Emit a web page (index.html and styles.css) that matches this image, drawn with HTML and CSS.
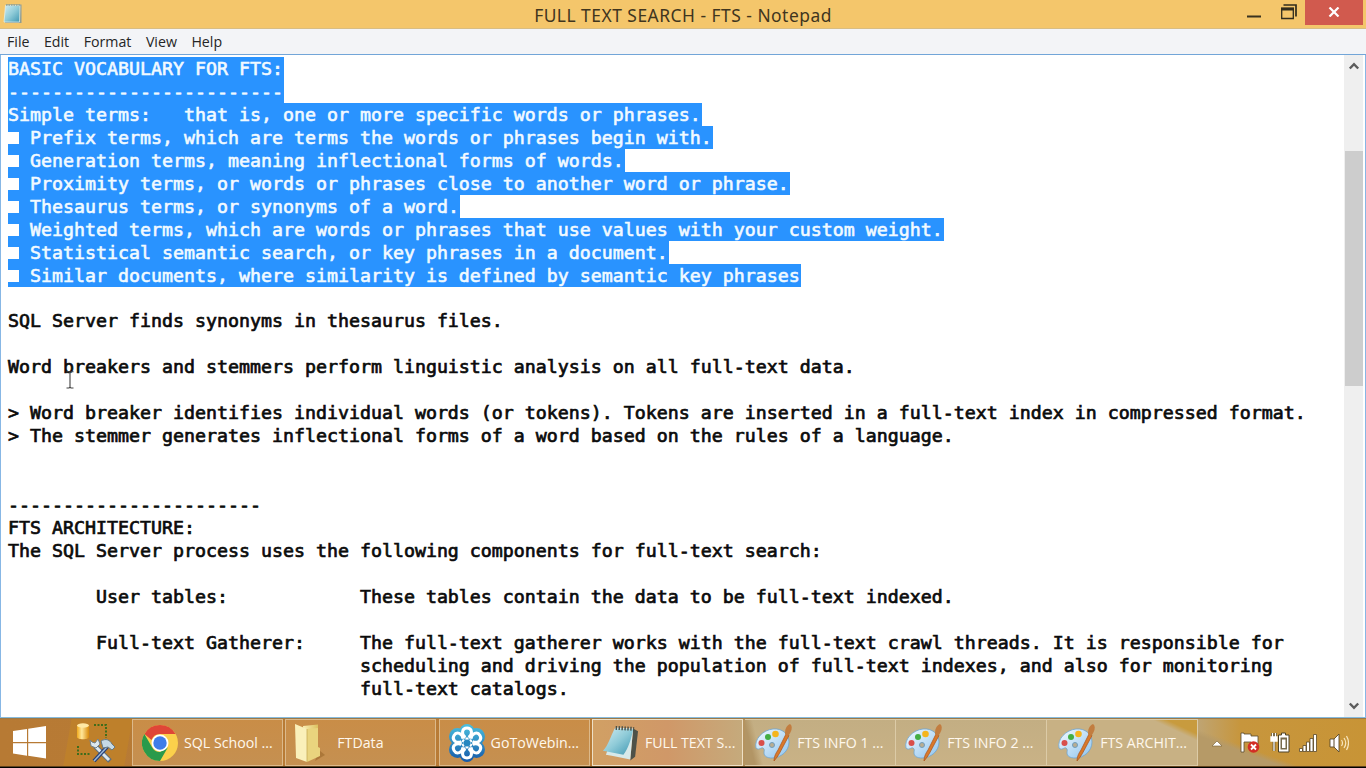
FILE: index.html
```html
<!DOCTYPE html>
<html lang="en">
<head>
<meta charset="utf-8">
<title>FULL TEXT SEARCH - FTS - Notepad</title>
<link rel="stylesheet" href="styles.css">
</head>
<body>
<svg class="defs" width="0" height="0" aria-hidden="true">
  <defs>
    <linearGradient id="pal" x1="0" y1="0" x2="1" y2="1"><stop offset="0" stop-color="#f4fbff"/><stop offset="1" stop-color="#8fc4ee"/></linearGradient>
    <linearGradient id="note" x1="0" y1="0" x2="1" y2="1"><stop offset="0" stop-color="#d2edf2"/><stop offset=".5" stop-color="#8fcbd8"/><stop offset="1" stop-color="#3d96b2"/></linearGradient>
    <linearGradient id="gold" x1="0" y1="0" x2="1" y2="0"><stop offset="0" stop-color="#f0a91d"/><stop offset=".4" stop-color="#ffe79a"/><stop offset="1" stop-color="#d98a0a"/></linearGradient>
    <linearGradient id="fold" x1="0" y1="0" x2="1" y2="0"><stop offset="0" stop-color="#f9eeb2"/><stop offset="1" stop-color="#dcc05f"/></linearGradient>
    <linearGradient id="gtw" gradientUnits="userSpaceOnUse" x1="0" y1="0" x2="0" y2="38"><stop offset="0" stop-color="#49c0df"/><stop offset="1" stop-color="#1558a8"/></linearGradient>
    <symbol id="paint" viewBox="0 0 38 38">
      <path d="M2 24C0 15 9 6 19 5c9-1 16 5 16 13 0 9-8 16-17 16-5 0-8-2-8-5 0-2 1-4-1-5-2-1-4 3-7 0z" fill="url(#pal)" stroke="#6fa5cf" stroke-width=".8"/>
      <circle cx="18" cy="21" r="2.500" fill="#b9ad91" stroke="#6f9dbd"/>
      <circle cx="7.500" cy="19" r="3" fill="#d94f4b"/><circle cx="14" cy="13" r="3" fill="#43ae43"/><circle cx="21.500" cy="10" r="3.300" fill="#f5b51f"/>
      <path d="M20 37c0-5 2-8 4-11l8-16 3 1.500-8 15c-2 4-4 7-7 10.500z" fill="#d9792b" stroke="#a8521b" stroke-width=".7"/>
      <path d="M31 10c0-5 1-8 5-10 3 2 2 8-2 12z" fill="#c27d40"/>
    </symbol>
  </defs>
</svg>
<div class="window">
  <header class="titlebar">
    <svg class="app-icon" viewBox="0 0 20 21"><path d="M4 1.500h15.500V20H3z" fill="#8d9b93"/><path d="M3.500 2.500h14.500L17.500 19H2z" fill="url(#note)" stroke="#e6f2ed" stroke-width=".7"/><path d="M4 2h15" stroke="#8ea39b" stroke-width="1.500" stroke-dasharray="1.500 1"/></svg>
    <h1 class="title">FULL TEXT SEARCH - FTS - Notepad</h1>
    <div class="controls">
      <svg class="min" viewBox="0 0 14 3"><path d="M0 1.500h14" stroke="#39321f" stroke-width="2"/></svg>
      <svg class="max" viewBox="0 0 16 16"><path d="M2.500 1h12.500v11.500" fill="none" stroke="#302c1d" stroke-width="1.700"/><path d="M.7 4.500h11.600v10H.7z" fill="none" stroke="#302c1d" stroke-width="1.300"/><path d="M0 5h13" stroke="#302c1d" stroke-width="3"/></svg>
      <div class="close"><svg viewBox="0 0 12 10"><path d="M1.500.5l9 9M10.500.5l-9 9" stroke="#fff" stroke-width="2.200"/></svg></div>
    </div>
  </header>
  <nav class="menubar"><span>File</span><span>Edit</span><span>Format</span><span>View</span><span>Help</span></nav>
  <main class="editor">
<pre class="text"><span class="sel">BASIC VOCABULARY FOR FTS:</span>
<span class="sel">-------------------------</span>
<span class="sel">Simple terms:   that is, one or more specific words or phrases.</span>
<span class="sel"><i class="sq"></i> Prefix terms, which are terms the words or phrases begin with.</span>
<span class="sel"><i class="sq"></i> Generation terms, meaning inflectional forms of words.</span>
<span class="sel"><i class="sq"></i> Proximity terms, or words or phrases close to another word or phrase.</span>
<span class="sel"><i class="sq"></i> Thesaurus terms, or synonyms of a word.</span>
<span class="sel"><i class="sq"></i> Weighted terms, which are words or phrases that use values with your custom weight.</span>
<span class="sel"><i class="sq"></i> Statistical semantic search, or key phrases in a document.</span>
<span class="sel"><i class="sq"></i> Similar documents, where similarity is defined by semantic key phrases</span>

SQL Server finds synonyms in thesaurus files.

Word breakers and stemmers perform linguistic analysis on all full-text data.

&gt; Word breaker identifies individual words (or tokens). Tokens are inserted in a full-text index in compressed format.
&gt; The stemmer generates inflectional forms of a word based on the rules of a language.


-----------------------
FTS ARCHITECTURE:
The SQL Server process uses the following components for full-text search:

        User tables:            These tables contain the data to be full-text indexed.

        Full-text Gatherer:     The full-text gatherer works with the full-text crawl threads. It is responsible for
                                scheduling and driving the population of full-text indexes, and also for monitoring
                                full-text catalogs.</pre>
    <svg class="ibeam" viewBox="0 0 8 18"><path d="M.5 .8h2.500l1 .8 1-.8h2.500M4 1v15.500M.5 17h2.500l1-.8 1 .8h2.500" fill="none" stroke="#444" stroke-width="1.100"/></svg>
    <div class="scrollbar">
      <svg viewBox="0 0 12 8"><path d="M1.800 6.500L6 2.200l4.200 4.300" fill="none" stroke="#5c5c5c" stroke-width="2.400"/></svg>
      <div class="thumb"></div>
      <svg viewBox="0 0 12 8"><path d="M1.800 1.500L6 5.800l4.200-4.300" fill="none" stroke="#5c5c5c" stroke-width="2.400"/></svg>
    </div>
  </main>
</div>
<footer class="taskbar">
  <div class="start"><svg viewBox="0 0 33 33"><path d="M0 5l14-2v13H0zM15.200 2.800L33 0v16H15.200zM0 17.200h14v12.500L0 27.500zM15.200 17.200H33v15.300l-17.800-2.700z" fill="#fff"/></svg></div>
  <div class="pinned"><svg viewBox="0 0 40 42">
    <path d="M18 3h12v13M2 24v8h12" fill="none" stroke="#3f6d1c" stroke-width="2" stroke-dasharray="2 1.500"/>
    <path d="M1 3v12c0 3 12 3 12 0V3z" fill="url(#gold)"/><ellipse cx="7" cy="3.500" rx="6" ry="2.200" fill="#ffe9a5"/>
    <path d="M19 24l15 15" stroke="#5e6e7e" stroke-width="5"/><path d="M19 24l14 14" stroke="#dce8f0" stroke-width="3"/>
    <path d="M14 18l1 6 5 2 4-4-2-5-3 4-3-1z" fill="#dce8f0" stroke="#71818c"/>
    <path d="M31 25L18 39" stroke="#263f75" stroke-width="4"/><path d="M31 25L18 39" stroke="#9cb7d8" stroke-width="1.500"/>
    <path d="M25 19c5-3 9-1 11 3l3 3-3 3-4-3-5 1z" fill="#c6d9e5" stroke="#647986"/>
  </svg></div>
  <div class="task"><svg viewBox="0 0 36 36"><circle cx="18" cy="18" r="18" fill="#fbd04b"/><path d="M2.400 9A18 18 0 0 1 33.600 9H18a9 9 0 0 0-8.500 6z" fill="#df4637"/><path d="M2.400 9A18 18 0 0 0 18 36l7.800-13.500L18 27a9 9 0 0 1-7.800-4.500z" fill="#2a9a4b"/><circle cx="18" cy="18" r="8.500" fill="#fff"/><circle cx="18" cy="18" r="6.700" fill="#3f7de8"/></svg><span>SQL School ...</span></div>
  <div class="task"><svg class="folder" viewBox="0 0 30 38"><path d="M24 26l6 5-10 6z" fill="#8b5c20" opacity=".45"/><path d="M8 2l15-1.500v28L11 34z" fill="url(#fold)"/><path d="M0 0l12 5v33L1 34z" fill="#faf0ba"/><path d="M12 5l11-1v19l2 1v8l-13 6z" fill="#e9d47e"/><path d="M12 5v33" stroke="#c7ab55" stroke-width=".8"/></svg><span>FTData</span></div>
  <div class="task"><svg viewBox="0 0 36 38"><g fill="url(#gtw)"><circle cx="18" cy="7.500" r="7.500"/><circle cx="8.500" cy="12.500" r="8.500"/><circle cx="27.500" cy="12.500" r="8.500"/><circle cx="8.500" cy="25.500" r="8.500"/><circle cx="27.500" cy="25.500" r="8.500"/><circle cx="18" cy="30.500" r="7.500"/><circle cx="18" cy="19" r="13"/></g><g fill="none" stroke="#fff" stroke-width="3"><path id="petal" d="M18 17v-3.500M16.300 13.500c-4.500-3.500-3.300-9.500 1.700-9.500s6.200 6 1.700 9.500"/><use href="#petal" transform="rotate(60 18 19)"/><use href="#petal" transform="rotate(120 18 19)"/><use href="#petal" transform="rotate(180 18 19)"/><use href="#petal" transform="rotate(240 18 19)"/><use href="#petal" transform="rotate(300 18 19)"/></g><circle cx="18" cy="19" r="3.500" fill="#2787c0"/></svg><span>GoToWebin...</span></div>
  <div class="task active"><svg viewBox="0 0 38 38"><path d="M32 4l5 3-3 26-5 4z" fill="#4d5148"/><path d="M14 3l18 1-3 32-19-4-6-1z" fill="#d7e9ea"/><path d="M13 4l19 1c-2 10-5 20-10 26L1 27C6 22 9 12 13 4z" fill="url(#note)"/><path d="M14 3.500l19 1" stroke="#4a5048" stroke-width="4" stroke-dasharray="1.500 1.500"/></svg><span>FULL TEXT S...</span></div>
  <div class="task paint-group first"><svg><use href="#paint"/></svg><span>FTS INFO 1 ...</span></div>
  <div class="task paint-group"><svg><use href="#paint"/></svg><span>FTS INFO 2 ...</span></div>
  <div class="task paint-group last"><svg><use href="#paint"/></svg><span>FTS ARCHIT...</span></div>
  <div class="tray">
    <svg class="t-up" viewBox="0 0 12 8"><path d="M1 7l5-5 5 5z" fill="#fff" stroke="#765b2e" stroke-width=".6"/></svg>
    <svg class="t-flag" viewBox="0 0 20 22"><path d="M1 1h3v1h7v2h7v8h-7v-2H4v10H1z" fill="#fff" stroke="#594a2e" stroke-width=".8"/><circle cx="13.500" cy="15" r="5.800" fill="#d22e25"/><path d="M11 12.500l5 5M16 12.500l-5 5" stroke="#fff" stroke-width="1.800"/></svg>
    <svg class="t-bat" viewBox="0 0 20 22"><path d="M2.500 1v4M5.500 1v4M4 9v10" stroke="#4e4328" stroke-width="2.600"/><path d="M2.500 1v4M5.500 1v4M1 5h6v4H1zM4 9v10" stroke="#fff" stroke-width="1.300" fill="#fff"/><path d="M8.500 3h3V1h4v2h3.500v17H8.500z" fill="#fff" stroke="#4e4328"/><path d="M10.500 5.500h6.500v12h-6.500z" fill="#766a4d"/><path d="M12 7.500h3.500v8.500H12z" fill="#fff"/></svg>
    <svg class="t-net" viewBox="0 0 18 18"><path d="M.5 14.500h3v3h-3zM4 11.500h3v6H4zM7.500 8h3v9.500h-3zM11 4.500h3v13h-3zM14.500.5h3v17h-3z" fill="#fff" stroke="#5a4929" stroke-width=".8"/></svg>
    <svg class="t-vol" viewBox="0 0 20 20"><path d="M1 6h4l5-5v18l-5-5H1z" fill="#fff" stroke="#5a4929" stroke-width=".9"/><path d="M5 6v8" stroke="#5a4929"/><path d="M12.500 7q2 3 0 6M15 5q3.500 5 0 10M17.500 3q4 7 0 14" fill="none" stroke="#f8e6bd" stroke-width="1.200"/></svg>
  </div>
</footer>
</body>
</html>
```
FILE: styles.css
```css
* { box-sizing: border-box; }
body { margin: 0; width: 1366px; height: 768px; overflow: hidden; display: flex; flex-direction: column; background: #000; font-family: "Open Sans", "Noto Sans", sans-serif; }
svg { display: block; flex: none; }
.defs { position: absolute; }
.window { height: 718px; display: flex; flex-direction: column; background: #fff; }
.titlebar { height: 29px; flex: none; display: grid; grid-template-columns: 112px 1fr 112px; background: #f4c66b; border-bottom: 1px solid #d8bd83; }
.app-icon { width: 20px; height: 21px; margin: 3px 0 0 2px; }
.title { margin: 0; font-family: "Noto Sans", sans-serif; font-size: 17.4px; letter-spacing: .5px; font-weight: 400; line-height: 30px; text-align: center; color: #40351e; white-space: nowrap; }
.controls { display: flex; align-items: flex-start; width: 119px; margin-left: -7px; }
.min { width: 14px; height: 3px; margin-top: 15px; }
.max { width: 16px; height: 16px; margin: 4px 0 0 20px; }
.close { width: 58px; height: 25px; margin-left: 8px; background: #d15a4e; display: flex; align-items: center; justify-content: center; padding-bottom: 2px; }
.close svg { width: 12px; height: 10px; }
.menubar { height: 26px; flex: none; display: flex; gap: 14.5px; padding-left: 7px; background: #f3f4f7; border-bottom: 1px solid #72a5d8; font-size: 14.2px; line-height: 25px; color: #252525; }
.editor { position: relative; flex: 1; min-height: 0; display: flex; justify-content: space-between; border-left: 1px solid #87b7e5; border-right: 1px solid #87b7e5; border-bottom: 1px solid #87bbdc; overflow: hidden; }
.text { margin: 0; padding: 3px 0 0 7px; font-family: "DejaVu Sans Mono", monospace; font-size: 18.28px; line-height: 22.96px; color: #0b0b0b; -webkit-text-stroke: .7px currentColor; }
.sel { display: inline-block; height: 22.96px; margin: -1px 0 1px; padding-right: 1px; line-height: 24.4px; vertical-align: top; background: #2993ff; color: #f2faff; -webkit-text-stroke-width: .6px; }
.sq { display: inline-block; width: 11px; height: 12px; background: #fff; vertical-align: 0; }
.ibeam { position: absolute; left: 65px; top: 316px; width: 8px; height: 18px; }
.scrollbar { width: 21px; padding-right: 2px; flex: none; display: grid; grid-template-rows: 96px 235px 1fr; justify-items: center; background: linear-gradient(90deg, #efefef 19px, #fff 19px); }
.scrollbar svg { width: 12px; height: 8px; margin-top: 7px; }
.scrollbar svg:last-child { align-self: end; margin-bottom: 7px; }
.thumb { width: 18px; background: #cdcdcd; }
.taskbar { height: 49px; display: flex; background: linear-gradient(100deg, transparent 0 70px, #be802b 71px 130px, transparent 131px), linear-gradient(90deg, #b77a34 0, #b97c37 590px, #b49461 750px, #bda77d 1190px, #c7963d 1240px, #c89436 100%); border-bottom: 1px solid #60421c; border-top: 1px solid #9b7948; }
.start { width: 76px; padding: 7px 0 0 13px; }
.start svg { width: 33px; height: 33px; }
.pinned { width: 56px; padding-top: 3px; }
.pinned svg { width: 40px; height: 42px; }
.task { width: 151px; height: 47px; margin-right: 2.3px; flex: none; display: flex; align-items: center; gap: 6px; padding-left: 9px; border: 1px solid #dcb98a; background: linear-gradient(#c98d47, #c59051); color: #fff8ed; font-size: 14.2px; white-space: nowrap; }
.task span { line-height: 20px; padding-top: 1px; }
.task svg { width: 36px; height: 38px; }
.task .folder { width: 30px; }
.task .folder + span { margin-left: 6px; }
.active { background: linear-gradient(90deg, #d1a064, #d09868 50%, #c5aa7c); border-color: #eee0c6; }
.active, .paint-group { gap: 5px; }
.active svg { width: 37px; }
.active { gap: 6px; }
.active + .paint-group { padding-left: 9px; }
.paint-group { width: 151px; margin-right: 0; padding-left: 8px; border-width: 1px 1px 1px 0; background: linear-gradient(#c3ae83, #c9b286); border-color: #dccba7; }
.first { background: linear-gradient(76deg, #b29565 0 10px, transparent 18px), linear-gradient(#c3ae83, #c9b286); }
.paint-group svg { width: 38px; height: 38px; }
.last { padding-left: 10px; background: linear-gradient(25deg, #c8b184 0 82%, #c89b3e 88%); }
.tray { flex: 1; display: flex; align-items: center; padding-left: 13px; background: linear-gradient(20deg, #b69a67 0 28%, transparent 34%); }
.t-up { width: 12px; height: 8px; }
.t-flag { width: 20px; height: 22px; margin-left: 17px; }
.t-bat { width: 20px; height: 22px; margin-left: 10px; }
.t-net { width: 18px; height: 18px; margin-left: 9px; }
.t-vol { width: 20px; height: 20px; margin-left: 12px; }
```
